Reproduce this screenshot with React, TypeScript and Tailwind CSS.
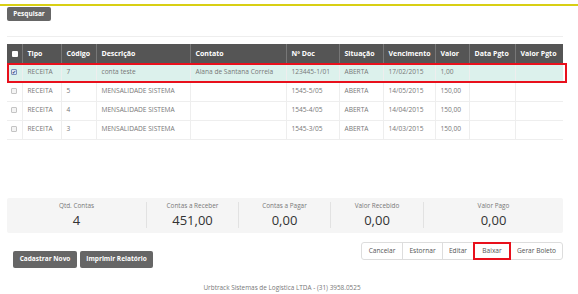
import React from 'react';

type Row = {
  tipo: string;
  codigo: string;
  descricao: string;
  contato: string;
  doc: string;
  situacao: string;
  vencimento: string;
  valor: string;
  checked?: boolean;
};

const rows: Row[] = [
  { tipo: 'RECEITA', codigo: '7', descricao: 'conta teste', contato: 'Alana de Santana Correia', doc: '123445-1/01', situacao: 'ABERTA', vencimento: '17/02/2015', valor: '1,00', checked: true },
  { tipo: 'RECEITA', codigo: '5', descricao: 'MENSALIDADE SISTEMA', contato: '', doc: '1545-5/05', situacao: 'ABERTA', vencimento: '14/05/2015', valor: '150,00' },
  { tipo: 'RECEITA', codigo: '4', descricao: 'MENSALIDADE SISTEMA', contato: '', doc: '1545-4/05', situacao: 'ABERTA', vencimento: '14/04/2015', valor: '150,00' },
  { tipo: 'RECEITA', codigo: '3', descricao: 'MENSALIDADE SISTEMA', contato: '', doc: '1545-3/05', situacao: 'ABERTA', vencimento: '14/03/2015', valor: '150,00' },
];

const cols = [
  { label: '', w: 'w-[15px]' },
  { label: 'Tipo', w: 'w-[39px]' },
  { label: 'Código', w: 'w-[35px]' },
  { label: 'Descrição', w: 'w-[94px]' },
  { label: 'Contato', w: 'w-[96px]' },
  { label: 'Nº Doc', w: 'w-[53px]' },
  { label: 'Situação', w: 'w-[44px]' },
  { label: 'Vencimento', w: 'w-[52px]' },
  { label: 'Valor', w: 'w-[34px]' },
  { label: 'Data Pgto', w: 'w-[46px]' },
  { label: 'Valor Pgto', w: 'w-[48px]' },
];

const totals = [
  { label: 'Qtd. Contas', value: '4', w: 'w-[139px]' },
  { label: 'Contas a Receber', value: '451,00', w: 'w-[92px]' },
  { label: 'Contas a Pagar', value: '0,00', w: 'w-[92px]' },
  { label: 'Valor Recebido', value: '0,00', w: 'w-[93px]' },
  { label: 'Valor Pago', value: '0,00', w: 'flex-1' },
];

function Box({ checked, header }: { checked?: boolean; header?: boolean }) {
  if (header) return <span className="inline-block h-[6px] w-[6px] bg-white rounded-[1px] align-middle" />;
  return (
    <span
      className={
        'inline-flex h-[6px] w-[6px] items-center justify-center rounded-[1px] border align-middle ' +
        (checked ? 'border-[#7c8fb8] bg-[#dfe6f5]' : 'border-[#c4c4c4] bg-[#f4f4f4]')
      }
    >
      {checked && <span className="text-[5px] leading-none text-[#2a3f78]">✔</span>}
    </span>
  );
}

export default function App() {
  return (
    <div className="w-[578px] h-[294px] bg-white font-['Open_Sans',sans-serif] overflow-hidden">
      <div className="pt-[4px]">
        <div className="h-[2px] bg-[#d8cf14]" />
      </div>
      <div className="px-[7px]">
        <button className="mt-[1px] block h-[14px] w-[44px] rounded-[2px] bg-[#666] text-[6.5px] leading-[14px] font-bold text-white">
          Pesquisar
        </button>
        <div className="mt-[15px] h-px w-[556px] bg-[#eee]" />

        <div className="relative mt-[7px] w-[556px]">
          <table className="w-[556px] table-fixed border-collapse leading-none">
            <thead>
              <tr className="h-[19px] bg-[#555]">
                {cols.map((c, i) => (
                  <th
                    key={i}
                    className={
                      c.w +
                      ' px-[5px] p-0 text-left text-[7px] font-bold text-white ' +
                      (i > 0 ? 'border-l border-[#777]' : 'text-center')
                    }
                  >
                    {i === 0 ? <Box header /> : c.label}
                  </th>
                ))}
              </tr>
            </thead>
            <tbody className="text-[6.6px] text-[#777]">
              {rows.map((r, i) => (
                <tr key={i} className={'h-[19px] border-b border-[#eee] ' + (r.checked ? 'bg-[#dcf1ec]' : 'bg-white')}>
                  <td className="p-0 text-center">
                    <Box checked={r.checked} />
                  </td>
                  {[r.tipo, r.codigo, r.descricao, r.contato, r.doc, r.situacao, r.vencimento, r.valor, '', ''].map((v, j) => (
                    <td key={j} className="border-l border-[#eee] px-[5px] whitespace-nowrap overflow-hidden">
                      {v}
                    </td>
                  ))}
                </tr>
              ))}
            </tbody>
          </table>
          <div className="pointer-events-none absolute left-0 top-[19px] h-[20px] w-[560px] border-2 border-[#e8101c]" />
        </div>

        <div className="mt-[58px] flex h-[35px] w-[556px] items-center rounded-[2px] bg-[#f5f5f5]">
          {totals.map((t, i) => (
            <div
              key={i}
              className={
                t.w + ' flex h-[26px] flex-col items-center justify-between ' + (i > 0 ? 'border-l border-[#e2e2e2]' : '')
              }
            >
              <span className="text-[6.4px] leading-[8px] text-[#777]">{t.label}</span>
              <span className="text-[13px] leading-[15px] text-[#333]">{t.value}</span>
            </div>
          ))}
        </div>

        <div className="flex w-[556px] items-start justify-between">
          <div className="ml-[6px] mt-[18px] flex gap-[3px]">
            <button className="h-[17px] w-[64px] rounded-[2px] bg-[#666] text-[6.5px] font-bold text-white">
              Cadastrar Novo
            </button>
            <button className="h-[17px] w-[73px] rounded-[2px] bg-[#666] text-[6.5px] font-bold text-white">
              Imprimir Relatório
            </button>
          </div>
          <div className="mt-[9px] flex h-[18px] rounded-[3px] border border-[#ddd] bg-white text-[6.6px] text-[#555]">
            <span className="flex w-[41px] items-center justify-center border-r border-[#ddd]">Cancelar</span>
            <span className="flex w-[40px] items-center justify-center border-r border-[#ddd]">Estornar</span>
            <span className="flex w-[30px] items-center justify-center">Editar</span>
            <span className="-my-px flex w-[38px] items-center justify-center border-2 border-[#e8101c]">Baixar</span>
            <span className="flex w-[51px] items-center justify-center">Gerar Boleto</span>
          </div>
        </div>

        <div className="mt-[16px] w-[550px] text-center text-[6.4px] leading-[8px] text-[#777]">
          Urbtrack Sistemas de Logística LTDA - (31) 3958.0525
        </div>
      </div>
    </div>
  );
}
